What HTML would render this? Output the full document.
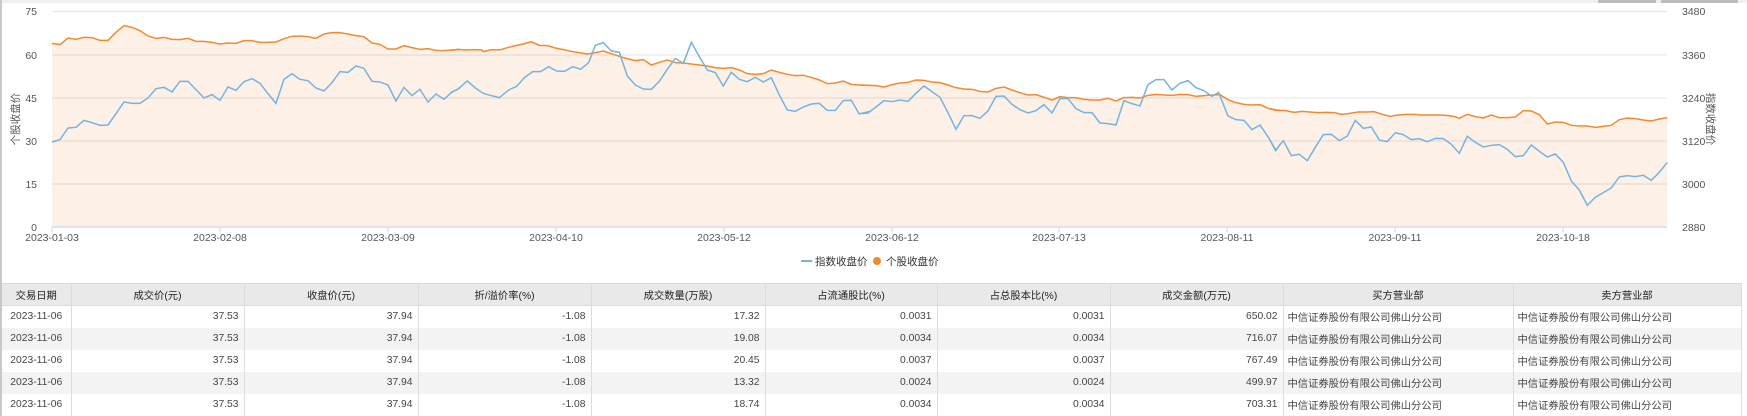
<!DOCTYPE html>
<html><head><meta charset="utf-8"><style>
*{margin:0;padding:0;box-sizing:border-box}
body{width:1747px;height:416px;overflow:hidden;background:#fff;font-family:"Liberation Sans","Noto Sans CJK SC",sans-serif;position:relative}
svg text{font-family:"Liberation Sans","Noto Sans CJK SC",sans-serif}
table{position:absolute;left:2px;top:283px;border-collapse:collapse;table-layout:fixed;font-size:10.3px;color:#444}
td,th{height:22px;border-right:1px solid #dcdcdc;padding:0 5px;white-space:nowrap;overflow:hidden}
th{background:#e9e9e9;font-weight:normal;color:#222;border-top:1px solid #dcdcdc;border-bottom:1px solid #dcdcdc}
tr:nth-child(odd) td{background:#f3f3f3}
td.c{text-align:center}td.r{text-align:right}td.l{text-align:left;padding-left:4px}
</style></head><body>
<div style="position:absolute;left:0;top:0;width:1747px;height:3px;background:#f0f0f0"></div>
<div style="position:absolute;left:1598px;top:0;width:58px;height:3px;background:#bdbdbd"></div>
<div style="position:absolute;left:1661px;top:0;width:77px;height:3px;background:#bdbdbd"></div>
<div style="position:absolute;left:0;top:0;width:2px;height:416px;background:#c8c8c8"></div>
<svg width="1747" height="280" style="position:absolute;left:0;top:0">
<g id="fills" fill="#fdf0e6">
<polygon transform="translate(40,10) scale(0.3333)" points="36,100 60,104 84,84 108,88 132,82 156,83 180,91 204,91 228,67 252,47 276,52 300,62 324,78 348,85 372,82 396,88 420,89 444,85 468,94 492,94 516,97 540,102 564,99 588,100 612,92 636,92 660,97 684,97 708,96 732,86 756,79 780,78 804,80 828,85 852,72 876,68 900,68 924,72 948,77 972,80 996,99 1020,103 1044,117 1068,117 1092,107 1116,113 1140,118 1164,116 1188,121 1212,122 1236,120 1260,118 1260,648 36,648"/>
<polygon transform="translate(450,10) scale(0.3333)" points="0,121 24,118 48,120 72,119 96,120 100,125 124,119 148,120 172,113 196,107 220,102 244,95 268,106 292,107 316,114 340,119 364,124 388,128 412,132 436,128 460,123 484,131 508,139 532,146 556,152 580,149 604,165 628,157 652,150 676,158 700,159 724,162 748,165 772,168 796,173 820,175 844,173 868,180 892,191 916,193 940,191 964,180 988,187 1012,193 1036,197 1060,196 1084,202 1108,210 1132,221 1156,219 1180,213 1204,223 1228,225 1260,226 1260,648 0,648"/>
<polygon transform="translate(860,10) scale(0.3333)" points="0,225 24,226 48,227 72,231 96,224 120,219 144,217 168,210 192,211 216,216 240,218 264,225 288,233 312,237 336,238 360,244 384,246 408,235 432,231 456,240 480,248 504,255 528,254 552,262 576,270 600,260 624,263 648,263 672,268 696,270 720,270 744,265 768,273 792,263 816,262 840,264 864,256 888,253 912,255 936,256 960,253 984,254 1008,259 1032,257 1056,255 1080,254 1104,269 1128,278 1152,283 1176,285 1200,284 1224,295 1248,301 1260,300 1260,648 0,648"/>
<polygon transform="translate(1270,10) scale(0.3333)" points="0,296 24,301 48,302 72,307 96,304 120,306 144,308 168,307 192,308 216,313 240,310 264,306 288,306 312,305 336,313 360,319 384,315 408,313 432,313 456,315 480,315 504,315 528,316 552,319 568,325 592,313 616,320 640,324 664,315 688,323 712,323 736,321 760,302 784,303 808,314 832,342 856,336 880,337 904,346 928,348 952,348 976,352 1000,349 1024,346 1048,329 1072,324 1096,326 1120,330 1144,333 1168,327 1192,323 1192,648 0,648"/>
</g>
<g stroke="rgba(0,0,0,0.085)" stroke-width="1.3">
<line x1="52" x2="1667" y1="11.5" y2="11.5"/><line x1="52" x2="1667" y1="55" y2="55"/><line x1="52" x2="1667" y1="98" y2="98"/><line x1="52" x2="1667" y1="141" y2="141"/><line x1="52" x2="1667" y1="184" y2="184"/>
</g>
<line x1="52" x2="1667" y1="227" y2="227" stroke="#dfe2eb" stroke-width="2"/>
<g stroke="#dfe2eb" stroke-width="1.5">
<line x1="52" x2="52" y1="227" y2="232"/><line x1="220" x2="220" y1="227" y2="232"/><line x1="388" x2="388" y1="227" y2="232"/><line x1="556" x2="556" y1="227" y2="232"/><line x1="724" x2="724" y1="227" y2="232"/><line x1="892" x2="892" y1="227" y2="232"/><line x1="1059" x2="1059" y1="227" y2="232"/><line x1="1227" x2="1227" y1="227" y2="232"/><line x1="1395" x2="1395" y1="227" y2="232"/><line x1="1563" x2="1563" y1="227" y2="232"/>
</g>
<g fill="none" stroke-width="1.5">
<g stroke="#f28a30">
<polyline vector-effect="non-scaling-stroke" transform="translate(40,10) scale(0.3333)" points="36,100 60,104 84,84 108,88 132,82 156,83 180,91 204,91 228,67 252,47 276,52 300,62 324,78 348,85 372,82 396,88 420,89 444,85 468,94 492,94 516,97 540,102 564,99 588,100 612,92 636,92 660,97 684,97 708,96 732,86 756,79 780,78 804,80 828,85 852,72 876,68 900,68 924,72 948,77 972,80 996,99 1020,103 1044,117 1068,117 1092,107 1116,113 1140,118 1164,116 1188,121 1212,122 1236,120 1260,118"/>
<polyline vector-effect="non-scaling-stroke" transform="translate(450,10) scale(0.3333)" points="0,121 24,118 48,120 72,119 96,120 100,125 124,119 148,120 172,113 196,107 220,102 244,95 268,106 292,107 316,114 340,119 364,124 388,128 412,132 436,128 460,123 484,131 508,139 532,146 556,152 580,149 604,165 628,157 652,150 676,158 700,159 724,162 748,165 772,168 796,173 820,175 844,173 868,180 892,191 916,193 940,191 964,180 988,187 1012,193 1036,197 1060,196 1084,202 1108,210 1132,221 1156,219 1180,213 1204,223 1228,225 1260,226"/>
<polyline vector-effect="non-scaling-stroke" transform="translate(860,10) scale(0.3333)" points="0,225 24,226 48,227 72,231 96,224 120,219 144,217 168,210 192,211 216,216 240,218 264,225 288,233 312,237 336,238 360,244 384,246 408,235 432,231 456,240 480,248 504,255 528,254 552,262 576,270 600,260 624,263 648,263 672,268 696,270 720,270 744,265 768,273 792,263 816,262 840,264 864,256 888,253 912,255 936,256 960,253 984,254 1008,259 1032,257 1056,255 1080,254 1104,269 1128,278 1152,283 1176,285 1200,284 1224,295 1248,301 1260,300"/>
<polyline vector-effect="non-scaling-stroke" transform="translate(1270,10) scale(0.3333)" points="0,296 24,301 48,302 72,307 96,304 120,306 144,308 168,307 192,308 216,313 240,310 264,306 288,306 312,305 336,313 360,319 384,315 408,313 432,313 456,315 480,315 504,315 528,316 552,319 568,325 592,313 616,320 640,324 664,315 688,323 712,323 736,321 760,302 784,303 808,314 832,342 856,336 880,337 904,346 928,348 952,348 976,352 1000,349 1024,346 1048,329 1072,324 1096,326 1120,330 1144,333 1168,327 1192,323"/>
</g>
<g stroke="#76b3e0">
<polyline vector-effect="non-scaling-stroke" transform="translate(40,10) scale(0.3333)" points="36,396 60,389 84,354 108,352 132,331 156,338 180,346 204,345 228,311 252,276 276,280 300,280 324,264 348,236 372,232 396,246 420,214 444,214 468,239 492,264 516,254 540,271 564,231 588,241 612,215 636,206 660,220 684,251 708,280 732,208 756,191 780,208 804,212 828,234 852,243 876,218 900,185 924,187 948,168 972,175 996,214 1020,216 1044,225 1068,273 1092,232 1116,257 1140,238 1164,276 1188,252 1212,268 1236,246 1260,234"/>
<polyline vector-effect="non-scaling-stroke" transform="translate(450,10) scale(0.3333)" points="0,250 24,237 52,213 76,234 100,250 124,257 148,263 176,240 200,229 224,202 248,185 272,185 296,170 320,183 344,184 368,170 392,178 416,158 436,106 460,98 484,123 508,127 532,198 556,225 580,237 604,238 628,214 652,178 676,145 700,160 724,97 748,140 772,180 796,188 820,228 844,187 868,208 892,215 916,202 940,216 964,203 988,255 1012,300 1036,304 1060,291 1084,282 1108,280 1132,301 1156,301 1180,272 1204,271 1228,312 1260,304"/>
<polyline vector-effect="non-scaling-stroke" transform="translate(860,10) scale(0.3333)" points="0,311 24,309 48,291 72,272 96,275 120,270 144,274 168,250 192,228 216,245 240,262 264,308 288,358 312,317 336,317 360,325 384,303 408,259 432,258 456,283 480,299 504,309 528,302 552,284 576,309 600,266 624,266 648,296 672,308 696,308 720,339 744,341 768,345 792,272 816,281 840,288 864,224 888,209 912,209 936,240 960,220 984,212 1008,233 1032,242 1056,259 1076,247 1104,318 1128,329 1152,331 1176,359 1200,345 1224,380 1248,421 1260,404"/>
<polyline vector-effect="non-scaling-stroke" transform="translate(1270,10) scale(0.3333)" points="0,391 16,421 40,392 64,437 88,433 112,452 136,412 160,374 184,373 208,392 232,378 256,331 280,355 304,351 328,390 352,395 376,368 400,374 424,389 448,386 472,395 496,385 520,386 544,403 568,430 592,379 616,397 640,411 664,406 688,404 712,418 736,440 760,437 784,405 808,424 832,441 856,432 880,457 904,513 928,540 952,586 976,562 1000,548 1024,534 1048,501 1072,497 1096,500 1120,496 1144,511 1168,487 1192,457"/>
</g>
</g>
<g font-size="10.5" fill="#555" text-anchor="end">
<text x="37" y="15">75</text><text x="37" y="59">60</text><text x="37" y="102">45</text><text x="37" y="145">30</text><text x="37" y="188">15</text><text x="37" y="231">0</text>
</g>
<g font-size="10.5" fill="#555">
<text x="1682" y="15">3480</text><text x="1682" y="59">3360</text><text x="1682" y="102">3240</text><text x="1682" y="145">3120</text><text x="1682" y="188">3000</text><text x="1682" y="231">2880</text>
</g>
<g font-size="10.5" fill="#555" text-anchor="middle">
<text x="52" y="241">2023-01-03</text><text x="220" y="241">2023-02-08</text><text x="388" y="241">2023-03-09</text><text x="556" y="241">2023-04-10</text><text x="724" y="241">2023-05-12</text><text x="892" y="241">2023-06-12</text><text x="1059" y="241">2023-07-13</text><text x="1227" y="241">2023-08-11</text><text x="1395" y="241">2023-09-11</text><text x="1563" y="241">2023-10-18</text>
</g>
<text font-size="10.5" fill="#555" text-anchor="middle" transform="translate(19,119) rotate(-90)">个股收盘价</text>
<text font-size="10.5" fill="#555" text-anchor="middle" transform="translate(1707,119) rotate(90)">指数收盘价</text>
<line x1="801" x2="812" y1="261" y2="261" stroke="#76b3e0" stroke-width="2"/>
<text x="815" y="265" font-size="10.5" fill="#333">指数收盘价</text>
<circle cx="877" cy="261" r="4" fill="#f28a30"/>
<text x="886" y="265" font-size="10.5" fill="#333">个股收盘价</text>
</svg>
<table>
<colgroup><col style="width:69px"><col style="width:173px"><col style="width:174px"><col style="width:173px"><col style="width:174px"><col style="width:172px"><col style="width:173px"><col style="width:173px"><col style="width:230px"><col style="width:228px"></colgroup>
<tr><th>交易日期</th><th>成交价(元)</th><th>收盘价(元)</th><th>折/溢价率(%)</th><th>成交数量(万股)</th><th>占流通股比(%)</th><th>占总股本比(%)</th><th>成交金额(万元)</th><th>买方营业部</th><th>卖方营业部</th></tr>
<tr><td class="c">2023-11-06</td><td class="r">37.53</td><td class="r">37.94</td><td class="r">-1.08</td><td class="r">17.32</td><td class="r">0.0031</td><td class="r">0.0031</td><td class="r">650.02</td><td class="l">中信证券股份有限公司佛山分公司</td><td class="l">中信证券股份有限公司佛山分公司</td></tr>
<tr><td class="c">2023-11-06</td><td class="r">37.53</td><td class="r">37.94</td><td class="r">-1.08</td><td class="r">19.08</td><td class="r">0.0034</td><td class="r">0.0034</td><td class="r">716.07</td><td class="l">中信证券股份有限公司佛山分公司</td><td class="l">中信证券股份有限公司佛山分公司</td></tr>
<tr><td class="c">2023-11-06</td><td class="r">37.53</td><td class="r">37.94</td><td class="r">-1.08</td><td class="r">20.45</td><td class="r">0.0037</td><td class="r">0.0037</td><td class="r">767.49</td><td class="l">中信证券股份有限公司佛山分公司</td><td class="l">中信证券股份有限公司佛山分公司</td></tr>
<tr><td class="c">2023-11-06</td><td class="r">37.53</td><td class="r">37.94</td><td class="r">-1.08</td><td class="r">13.32</td><td class="r">0.0024</td><td class="r">0.0024</td><td class="r">499.97</td><td class="l">中信证券股份有限公司佛山分公司</td><td class="l">中信证券股份有限公司佛山分公司</td></tr>
<tr><td class="c">2023-11-06</td><td class="r">37.53</td><td class="r">37.94</td><td class="r">-1.08</td><td class="r">18.74</td><td class="r">0.0034</td><td class="r">0.0034</td><td class="r">703.31</td><td class="l">中信证券股份有限公司佛山分公司</td><td class="l">中信证券股份有限公司佛山分公司</td></tr>
</table>
</body></html>
